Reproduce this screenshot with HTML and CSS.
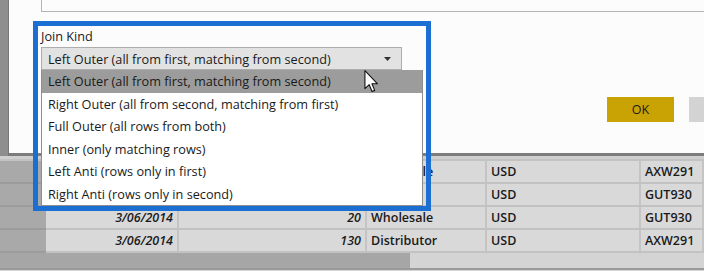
FILE: index.html
```html
<!DOCTYPE html>
<html lang="en">
<head>
  <meta charset="UTF-8" />
  <meta name="viewport" content="width=device-width, initial-scale=1" />
  <title>Merge - Join Kind</title>
  <link rel="stylesheet" href="styles.css">
</head>
<body>
  <div class="screen">
    <div class="top">
      <div class="strip"></div>
      <div class="dialog">
        <div class="prev-field"></div>
        <div class="join">
          <div class="join-label">Join Kind</div>
          <div class="select">
            <span>Left Outer (all from first, matching from second)</span>
            <svg class="caret" viewBox="0 0 7 4"><path d="M0 0h7L3.5 4z"/></svg>
          </div>
        </div>
        <div class="actions">
          <button class="btn-ok">OK</button>
          <button class="btn-cancel" aria-label="Cancel"></button>
        </div>
      </div>
    </div>

    <div class="gap"></div>

    <!-- rows 1-2 sit under the open list, only their right cells show -->
    <table class="grid">
      <colgroup>
        <col class="c-head"><col class="c-date"><col class="c-units"><col class="c-channel"><col class="c-cur"><col class="c-code">
      </colgroup>
      <tr><td class="rowhead"></td><td class="date"></td><td class="num"></td><td>Wholesale</td><td>USD</td><td>AXW291</td></tr>
      <tr><td class="rowhead"></td><td class="date"></td><td class="num"></td><td></td><td>USD</td><td>GUT930</td></tr>
      <tr><td class="rowhead"></td><td class="date">3/06/2014</td><td class="num">20</td><td>Wholesale</td><td>USD</td><td>GUT930</td></tr>
      <tr><td class="rowhead"></td><td class="date">3/06/2014</td><td class="num">130</td><td>Distributor</td><td>USD</td><td>AXW291</td></tr>
    </table>

    <div class="hscroll"><div class="thumb"></div></div>

    <!-- open dropdown list, drawn over the grid -->
    <ul class="dropdown">
      <li class="selected">Left Outer (all from first, matching from second)</li>
      <li>Right Outer (all from second, matching from first)</li>
      <li>Full Outer (all rows from both)</li>
      <li>Inner (only matching rows)</li>
      <li>Left Anti (rows only in first)</li>
      <li>Right Anti (rows only in second)</li>
    </ul>

    <div class="highlight"></div>

    <svg class="cursor" viewBox="0 0 13 21">
      <path d="M0.5 0.5V17L4.4 13.4L7 19.6L9.4 18.6L6.9 12.6H12Z" fill="#fff" stroke="#111" stroke-width="1" stroke-linejoin="round"/>
    </svg>
  </div>
</body>
</html>
```

FILE: styles.css
```css
body {
  margin: 0;
  background-color: #d6d6d6;
  font-family: "Open Sans", "Noto Sans", sans-serif;
  color: #1a1a1a;
}

.screen {
  position: relative;
  width: 704px;
  height: 271px;
  overflow: hidden;
  display: flex;
  flex-direction: column;
}

.top {
  display: flex;
  height: 156px;
}

.strip {
  width: 8px;
  background-color: #8e8e8e;
  border-right: 1px solid #777;
}

.dialog {
  flex: 1;
  background-color: #fcfcfc;
  border-bottom: 3px solid #7c7c7c;
  padding-left: 32px;
}

.prev-field {
  height: 12px;
  border: 1px solid #b4b4b4;
  border-top: none;
  border-right: none;
  box-sizing: border-box;
}

.join {
  margin-top: 16px;
  width: 361px;
}

.join-label {
  font-size: 12.7px;
  line-height: 16px;
  margin-bottom: 3px;
}

.select {
  height: 23px;
  box-sizing: border-box;
  background-color: #e2e2e2;
  border: 1px solid #adadad;
  display: flex;
  align-items: center;
  justify-content: space-between;
  padding: 0 10px 0 6px;
  font-size: 12.7px;
}

.caret {
  width: 7px;
  height: 4px;
  fill: #333;
}

.actions {
  display: flex;
  justify-content: flex-end;
  gap: 15px;
  margin-top: 27px;
  margin-right: -60px;
}

.btn-ok,
.btn-cancel {
  height: 25px;
  width: 67px;
  border: none;
  font-family: inherit;
  font-size: 12.5px;
  padding: 0;
}

.btn-ok {
  background-color: #c9a204;
  color: #1a1a1a;
}

.btn-cancel {
  width: 75px;
  background-color: #d3d3d3;
}

.gap {
  height: 3px;
  background-color: #cfcfcf;
}

.grid {
  border-collapse: collapse;
  table-layout: fixed;
  width: 704px;
  background-color: #d9d9d9;
  border-top: 2px solid #c2c2c2;
  font-size: 12.5px;
  font-weight: 600;
}

.c-head { width: 46px; }
.c-date { width: 132px; }
.c-units { width: 188px; }
.c-channel { width: 120px; }
.c-cur { width: 154px; }

.grid td {
  height: 21px;
  padding: 0 4px;
  border-bottom: 2px solid #c2c2c2;
  border-right: 2px solid #c4c4c4;
  white-space: nowrap;
  overflow: hidden;
}

.grid .rowhead {
  background-color: #a9a9a9;
  border-bottom-color: #9c9c9c;
  border-right: none;
}

.date,
.num {
  text-align: right;
  font-style: italic;
}

.hscroll {
  height: 15px;
  background-color: #d4d4d4;
  border-bottom: 2px solid #9a9a9a;
}

.thumb {
  width: 410px;
  height: 100%;
  background-color: #a6a6a6;
}

.dropdown {
  position: absolute;
  left: 41px;
  top: 70px;
  width: 382px;
  margin: 0;
  padding: 0;
  list-style: none;
  background-color: #fff;
  border: 1px solid #8d8d8d;
  border-top: none;
  box-sizing: border-box;
  font-size: 12.7px;
}

.dropdown li {
  height: 22.5px;
  line-height: 22.5px;
  padding-left: 6px;
}

.dropdown .selected {
  background-color: #9c9c9c;
}

.highlight {
  position: absolute;
  left: 33px;
  top: 21px;
  width: 398px;
  height: 190px;
  border: 5px solid #1b6fd2;
  box-sizing: border-box;
}

.cursor {
  position: absolute;
  left: 364px;
  top: 70px;
  width: 15px;
  height: 23px;
}
```
